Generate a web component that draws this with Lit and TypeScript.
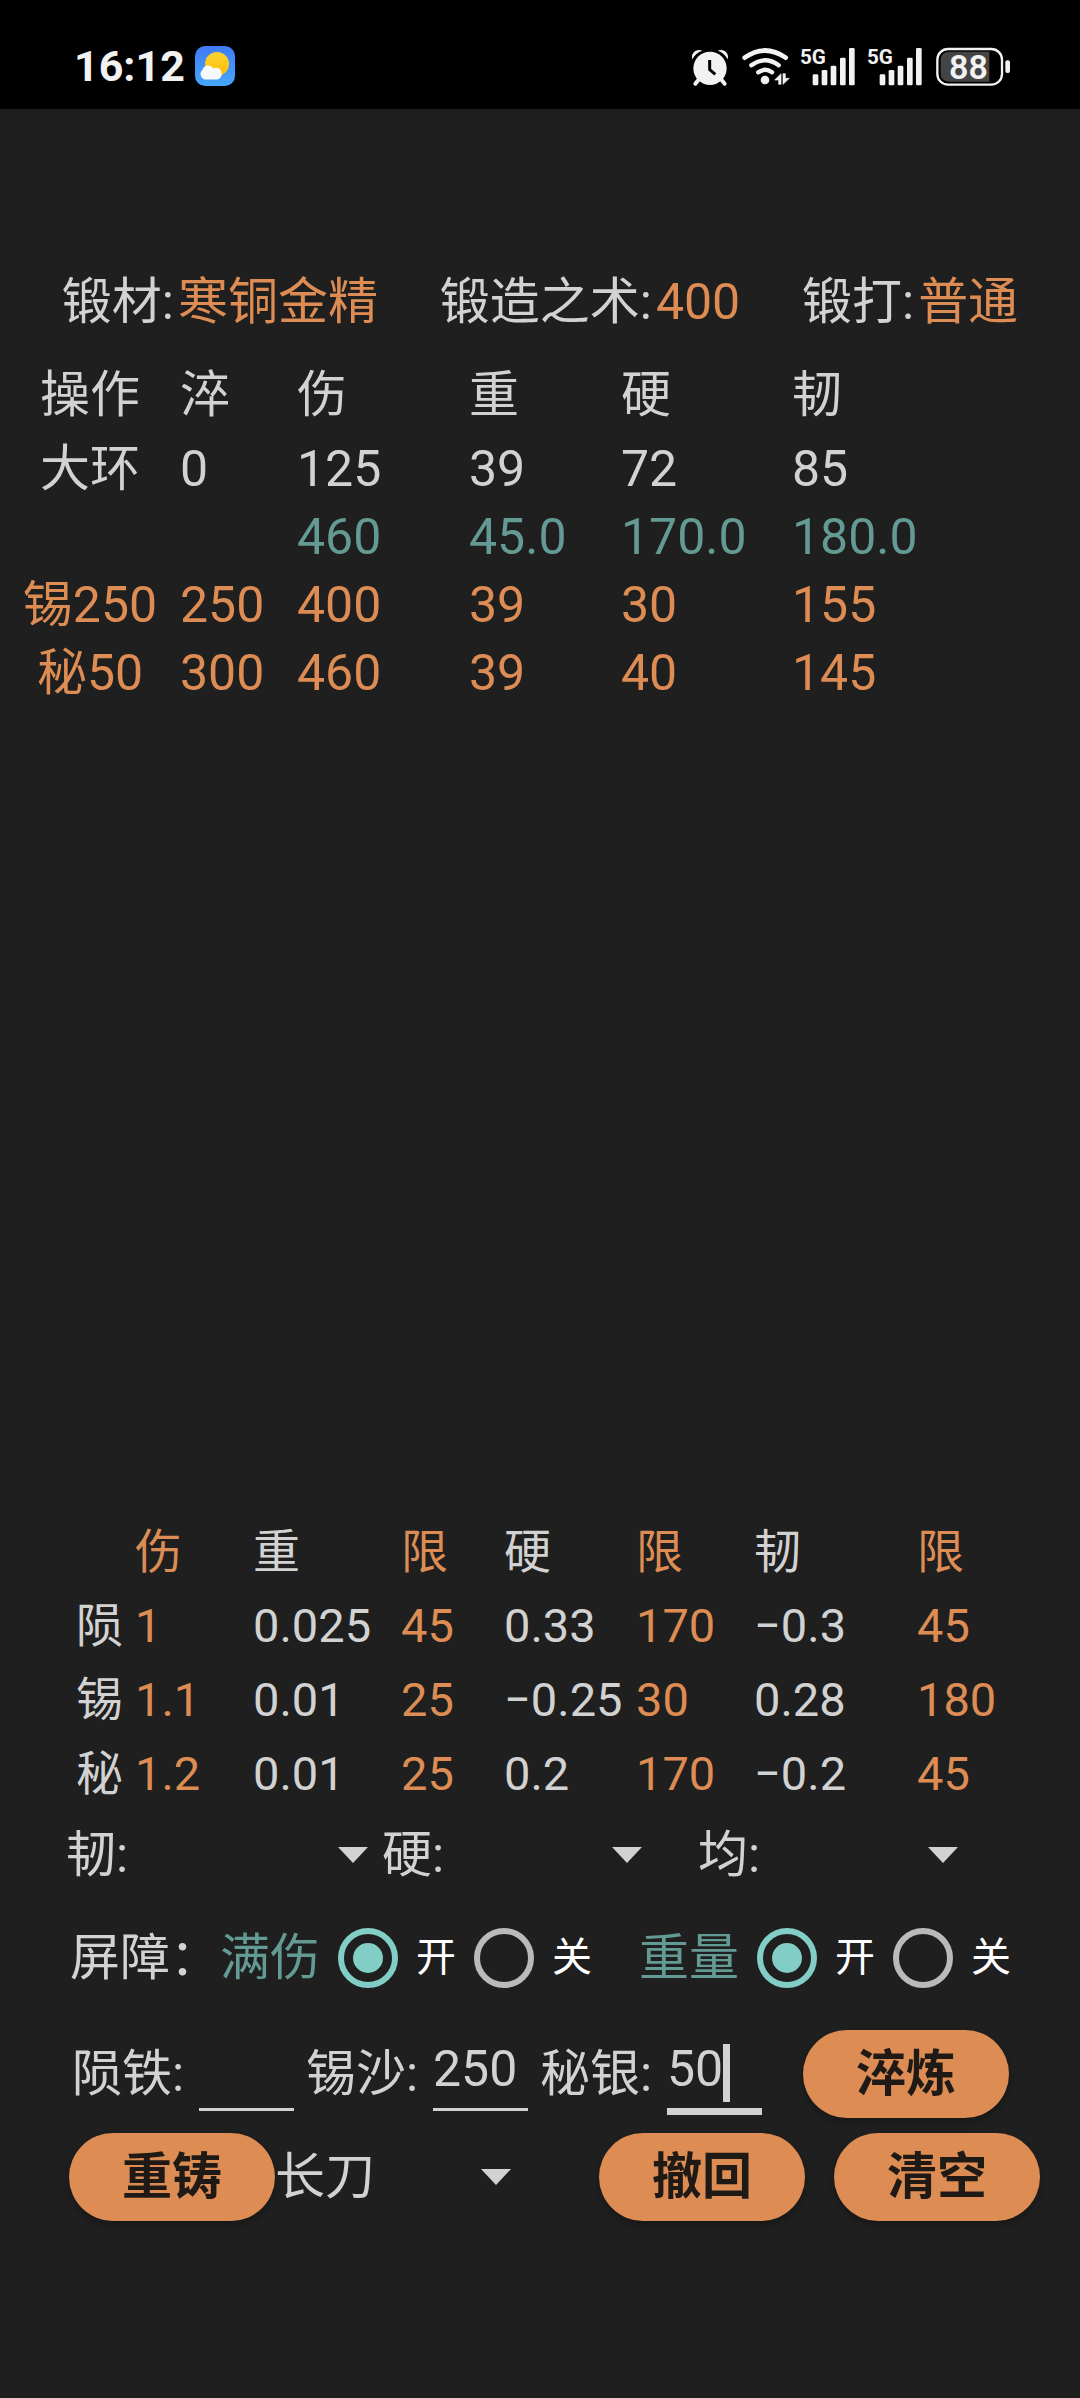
import { LitElement, html, css, nothing } from "lit";
import { customElement, property, state } from "lit/decorators.js";
import { classMap } from "lit/directives/class-map.js";

const FONT = css`Roboto, "Noto Sans CJK SC", sans-serif`;

@customElement("status-bar")
class StatusBar extends LitElement {
  static styles = css`
    :host {
      display: flex;
      align-items: center;
      justify-content: space-between;
      box-sizing: border-box;
      height: 109px;
      padding: 23px 69px 0 74px;
      background: #000;
      color: #f2f2f2;
      font-family: ${FONT};
    }
    .side {
      display: flex;
      align-items: center;
      gap: 10px;
    }
    .time {
      min-width: 109px;
      font-size: 43px;
      font-weight: 700;
      line-height: 48px;
    }
    svg {
      display: block;
      flex: none;
      overflow: visible;
    }
    .network {
      font: 700 62px Roboto, sans-serif;
    }
    .level {
      font: 600 102px Roboto, sans-serif;
    }
  `;

  private signal() {
    return html`<svg width="57" height="39" viewBox="417 78 171 117" fill="#f2f2f2" role="img" aria-label="signal">
      <text class="network" x="420" y="130">5G</text>
      <rect x="458" y="160" width="17" height="33" rx="4" />
      <rect x="485" y="147" width="17" height="46" rx="4" />
      <rect x="512" y="134" width="17" height="59" rx="4" />
      <rect x="540" y="110" width="17" height="83" rx="4" />
      <rect x="567" y="81" width="17" height="112" rx="4" />
    </svg>`;
  }

  render() {
    return html`
      <div class="side">
        <span class="time">16:12</span>
        <svg width="40" height="40" viewBox="0 0 40 40" role="img" aria-label="weather">
          <defs>
            <linearGradient id="sky" x1="0" y1="0" x2="0" y2="1">
              <stop offset="0" stop-color="#3f7bf6" />
              <stop offset="1" stop-color="#45a6fb" />
            </linearGradient>
            <linearGradient id="sun" x1="0" y1="0" x2="0" y2="1">
              <stop offset="0" stop-color="#fbd332" />
              <stop offset="1" stop-color="#ffbe05" />
            </linearGradient>
          </defs>
          <rect width="40" height="40" rx="10" fill="url(#sky)" />
          <circle cx="22" cy="18" r="12" fill="url(#sun)" />
          <path d="M12 33.500a5.500 5.500 0 0 1-4.600-9.500a6 6 0 0 1 11-1.600a5.600 5.600 0 0 1 8.200 5.100a5.500 5.500 0 0 1-4.600 6z" fill="#f6fafd" />
        </svg>
      </div>
      <div class="side">
        <svg width="41" height="39" viewBox="93 78 123 117" fill="#f2f2f2" role="img" aria-label="alarm">
          <circle cx="150" cy="142" r="50" />
          <path d="M97 115C91 98 108 81 127 89C114 93 103 102 97 115Z" />
          <path d="M203 115C209 98 192 81 173 89C186 93 197 102 203 115Z" />
          <path d="M115 177L106 188M185 177L194 188" stroke="#f2f2f2" stroke-width="12" stroke-linecap="round" />
          <path d="M149 117V146L166 160" fill="none" stroke="#000" stroke-width="9" />
        </svg>
        <svg width="47" height="39" viewBox="246 78 141 117" fill="none" stroke="#f2f2f2" role="img" aria-label="wifi">
          <path d="M254 110Q315 67 377 110" stroke-width="14" stroke-linecap="round" />
          <path d="M274 133Q315 103 356 133" stroke-width="13" stroke-linecap="round" />
          <path d="M295 154Q315 139 336 154" stroke-width="13" stroke-linecap="round" />
          <circle cx="315" cy="177" r="13" fill="#f2f2f2" stroke="none" />
          <path d="M363 158V190H356V177H344Z M369 190V158H376V172H388Z" fill="#f2f2f2" stroke="#f2f2f2" stroke-width="2" />
        </svg>
        ${this.signal()} ${this.signal()}
        <svg width="78" height="39" viewBox="819 78 234 117" fill="#f2f2f2" role="img" aria-label="battery">
          <path d="M868 92H988V182H868Q842 182 842 156V118Q842 92 868 92Z" fill="#444" />
          <rect x="832" y="84" width="194" height="107" rx="32" fill="none" stroke="#f2f2f2" stroke-width="7" />
          <rect x="1036" y="118" width="14" height="38" rx="6" />
          <text class="level" x="867" y="173">88</text>
        </svg>
      </div>
    `;
  }
}

@customElement("drop-down")
class DropDown extends LitElement {
  @property() label = "";
  @property() value = "";
  @property({ type: Boolean, attribute: "hide-label" }) hideLabel = false;

  static styles = css`
    :host {
      display: flex;
      align-items: center;
      color: #d2d2d2;
      font: 50px/60px ${FONT};
    }
    .box {
      display: grid;
      flex: 1;
      align-items: center;
      min-width: 0;
    }
    select {
      grid-area: 1 / 1;
      appearance: none;
      width: 100%;
      height: 60px;
      margin: 0;
      padding: 0;
      border: 0;
      outline: 0;
      background: transparent;
      color: inherit;
      font: inherit;
    }
    .arrow {
      grid-area: 1 / 1;
      justify-self: end;
      margin-right: 14px;
      pointer-events: none;
    }
  `;

  render() {
    return html`
      ${this.hideLabel ? nothing : html`<label for="pick">${this.label}</label>`}
      <span class="box">
        <select id="pick" aria-label=${this.label}>
          <option>${this.value}</option>
        </select>
        <svg class="arrow" width="30" height="16" viewBox="0 0 30 16" aria-hidden="true">
          <path d="M0 0H30L15 16Z" fill="#d2d2d2" />
        </svg>
      </span>
    `;
  }
}

@customElement("switch-pair")
class SwitchPair extends LitElement {
  @property() label = "";
  @state() private on = true;

  static styles = css`
    fieldset {
      display: flex;
      align-items: center;
      gap: 18px;
      margin: 0;
      padding: 0;
      border: 0;
      font: 50px/60px ${FONT};
    }
    .name {
      color: #639a94;
    }
    .choice {
      display: flex;
      align-items: center;
      gap: 18px;
      color: #fff;
      font-size: 40px;
    }
    input {
      appearance: none;
      box-sizing: border-box;
      width: 60px;
      height: 60px;
      margin: 0;
      padding: 9px;
      border: 6px solid #bababa;
      border-radius: 50%;
      background-clip: content-box;
    }
    input:checked {
      border-color: #82cdc5;
      background-color: #82cdc5;
    }
  `;

  render() {
    return html`
      <fieldset aria-label=${this.label}>
        <span class="name">${this.label}</span>
        <label class="choice">
          <input type="radio" name="pair" .checked=${this.on} @change=${() => (this.on = true)} />开
        </label>
        <label class="choice">
          <input type="radio" name="pair" .checked=${!this.on} @change=${() => (this.on = false)} />关
        </label>
      </fieldset>
    `;
  }
}

type Tone = "plain" | "goal" | "step";

const HISTORY: { tone: Tone; cells: string[] }[] = [
  { tone: "plain", cells: ["大环", "0", "125", "39", "72", "85"] },
  { tone: "goal", cells: ["", "", "460", "45.0", "170.0", "180.0"] },
  { tone: "step", cells: ["锡250", "250", "400", "39", "30", "155"] },
  { tone: "step", cells: ["秘50", "300", "460", "39", "40", "145"] },
];

const RATES = [
  ["陨", "1", "0.025", "45", "0.33", "170", "−0.3", "45"],
  ["锡", "1.1", "0.01", "25", "−0.25", "30", "0.28", "180"],
  ["秘", "1.2", "0.01", "25", "0.2", "170", "−0.2", "45"],
];

@customElement("app-root")
class AppRoot extends LitElement {
  static styles = css`
    :host {
      display: flex;
      flex-direction: column;
      box-sizing: border-box;
      min-height: 100vh;
      padding-bottom: 177px;
      background: #1f1f1f;
      color: #d2d2d2;
      font: 50px/60px ${FONT};
    }
    .summary {
      display: flex;
      justify-content: space-evenly;
      padding: 163px 0 23px;
      white-space: nowrap;
    }
    .summary .accent {
      margin-left: 4px;
    }
    .accent {
      color: #dd8c53;
    }
    table {
      display: block;
      white-space: nowrap;
    }
    thead,
    tbody {
      display: block;
    }
    th,
    td {
      padding: 0;
      font-weight: 400;
      text-align: left;
    }
    tr {
      display: grid;
    }
    .history {
      flex: 1;
      line-height: 68px;
    }
    .history tr {
      grid-template-columns: 180fr 117fr 172fr 152fr 171fr 288fr;
    }
    .history thead {
      line-height: 80px;
    }
    .history th:first-child {
      text-align: center;
    }
    .goal {
      color: #639a94;
    }
    .step {
      color: #dd8c53;
    }
    .rates {
      font-size: 47px;
      line-height: 74px;
    }
    .rates tr {
      grid-template-columns: 135fr 118fr 148fr 103fr 132fr 118fr 163fr 163fr;
    }
    .rates th:first-child {
      padding-right: 12px;
      text-align: right;
    }
    .plans {
      display: grid;
      grid-template-columns: repeat(3, 1fr);
      align-items: center;
      height: 88px;
      padding: 0 66px;
    }
    .inset {
      padding-right: 42px;
    }
    .barriers {
      display: flex;
      align-items: center;
      height: 117px;
      padding: 0 69px 0 70px;
    }
    .weight {
      margin-left: auto;
    }
    .feed {
      display: flex;
      align-items: center;
      gap: 12px;
      padding: 14px 71px 15px 72px;
    }
    .ore {
      display: flex;
      align-items: center;
      align-self: stretch;
      color: #d2d2d2;
    }
    .ore-name {
      width: 127px;
    }
    .field {
      position: relative;
      align-self: flex-start;
      height: 78px;
      border-bottom: 3px solid #d2d2d2;
    }
    .field.active {
      border-bottom-width: 7px;
    }
    .field input {
      box-sizing: border-box;
      width: 95px;
      height: 78px;
      margin: 0;
      padding: 0;
      border: 0;
      outline: 0;
      background: transparent;
      color: inherit;
      font: inherit;
    }
    .caret {
      position: absolute;
      top: 14px;
      left: 56px;
      width: 7px;
      height: 58px;
      background: #d2d2d2;
    }
    button {
      width: 206px;
      height: 88px;
      margin: 0;
      padding: 0;
      border: 0;
      border-radius: 44px;
      background: #dd8c53;
      box-shadow: 0 4px 6px rgb(0 0 0 / 25%);
      color: #1f1a16;
      font: 700 50px/60px ${FONT};
    }
    .push {
      margin-left: auto;
    }
    .actions {
      display: flex;
      align-items: center;
      padding: 0 40px 0 69px;
    }
    .weapon {
      width: 250px;
    }
    .pair {
      display: flex;
      gap: 29px;
    }
  `;

  private ore(id: string, name: string, value: string, active = false) {
    return html`<div class="ore">
      <label class="ore-name" for=${id}>${name}</label>
      <span class=${classMap({ field: true, active })}>
        <input id=${id} inputmode="numeric" .value=${value} />
        ${active ? html`<span class="caret"></span>` : nothing}
      </span>
    </div>`;
  }

  render() {
    return html`
      <status-bar></status-bar>
      <div class="summary">
        <span>锻材:<span class="accent">寒铜金精</span></span>
        <span>锻造之术:<span class="accent">400</span></span>
        <span>锻打:<span class="accent">普通</span></span>
      </div>
      <table class="history">
        <thead>
          <tr>
            ${["操作", "淬", "伤", "重", "硬", "韧"].map((h) => html`<th scope="col">${h}</th>`)}
          </tr>
        </thead>
        <tbody>
          ${HISTORY.map(
            ({ tone, cells }) => html`<tr class=${tone}>
              ${cells.map((c, i) => (i === 0 ? html`<th scope="row">${c}</th>` : html`<td>${c}</td>`))}
            </tr>`
          )}
        </tbody>
      </table>
      <table class="rates">
        <thead>
          <tr>
            ${["", "伤", "重", "限", "硬", "限", "韧", "限"].map(
              (h, i) => html`<th scope="col" class=${i % 2 ? "accent" : ""}>${h}</th>`
            )}
          </tr>
        </thead>
        <tbody>
          ${RATES.map(
            (row) => html`<tr>
              ${row.map((c, i) =>
                i === 0 ? html`<th scope="row">${c}</th>` : html`<td class=${i % 2 ? "accent" : ""}>${c}</td>`
              )}
            </tr>`
          )}
        </tbody>
      </table>
      <div class="plans">
        <drop-down label="韧:"></drop-down>
        <drop-down class="inset" label="硬:"></drop-down>
        <drop-down class="inset" label="均:"></drop-down>
      </div>
      <div class="barriers">
        <span>屏障：</span>
        <switch-pair label="满伤"></switch-pair>
        <switch-pair class="weight" label="重量"></switch-pair>
      </div>
      <div class="feed">
        ${this.ore("iron", "陨铁:", "")} ${this.ore("tin", "锡沙:", "250")}
        ${this.ore("silver", "秘银:", "50", true)}
        <button class="push" type="button">淬炼</button>
      </div>
      <div class="actions">
        <button type="button">重铸</button>
        <drop-down class="weapon" label="武器" value="长刀" hide-label></drop-down>
        <div class="pair push">
          <button type="button">撤回</button>
          <button type="button">清空</button>
        </div>
      </div>
    `;
  }
}
